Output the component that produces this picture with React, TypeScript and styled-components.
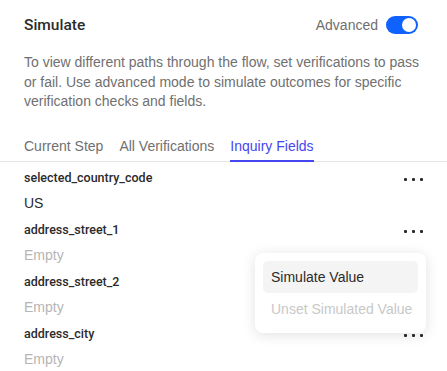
import React from "react";
import styled, { createGlobalStyle } from "styled-components";

const GlobalStyle = createGlobalStyle`
  body {
    margin: 0;
    background: #ffffff;
    font-family: "Liberation Sans", Arial, sans-serif;
    color: #2b2b2b;
  }
`;

const Panel = styled.div`
  position: relative;
  width: 447px;
  height: 371px;
  overflow: hidden;
  background: #fff;
`;

const Header = styled.header`
  display: flex;
  align-items: center;
  justify-content: space-between;
  padding: 15px 29px 0 24px;
  height: 20px;
`;

const Title = styled.h1`
  margin: 0;
  font-family: Roboto, "Liberation Sans", sans-serif;
  font-size: 15.5px;
  font-weight: 500;
  color: #2b2b2b;
`;

const ToggleWrap = styled.label`
  display: flex;
  align-items: center;
  gap: 8px;
  font-size: 14px;
  color: #6f6f6f;
`;

const Switch = styled.span<{ $on: boolean }>`
  position: relative;
  width: 32px;
  height: 18px;
  border-radius: 9px;
  background: ${(p) => (p.$on ? "#0f62fe" : "#cfcfcf")};

  &::after {
    content: "";
    position: absolute;
    top: 2px;
    left: ${(p) => (p.$on ? "16px" : "2px")};
    width: 14px;
    height: 14px;
    border-radius: 50%;
    background: #fff;
  }
`;

const Description = styled.p`
  margin: 18px 24px 0;
  font-size: 14px;
  line-height: 19.5px;
  color: #707070;
`;

const Tabs = styled.nav`
  display: flex;
  gap: 16px;
  margin-top: 25px;
  padding: 0 24px;
  border-bottom: 1px solid #e6e6e6;
`;

const Tab = styled.span<{ $active?: boolean }>`
  padding-bottom: 5px;
  font-size: 14px;
  line-height: 18px;
  color: ${(p) => (p.$active ? "#4646f0" : "#707070")};
  border-bottom: 2px solid ${(p) => (p.$active ? "#4646f0" : "transparent")};
  margin-bottom: -1px;
`;

const FieldList = styled.ul`
  list-style: none;
  margin: 0;
  padding: 8px 0 0;
`;

const Field = styled.li`
  display: flex;
  justify-content: space-between;
  padding: 0 24px;
  height: 52px;
`;

const FieldText = styled.div`
  display: flex;
  flex-direction: column;
`;

const FieldName = styled.span`
  font-family: Roboto, "Liberation Sans", sans-serif;
  font-size: 12.5px;
  font-weight: 500;
  line-height: 16px;
  color: #2b2b2b;
`;

const FieldValue = styled.span<{ $empty: boolean }>`
  margin-top: 8px;
  font-size: 14px;
  line-height: 18px;
  color: ${(p) => (p.$empty ? "#b5b5b5" : "#2b2b2b")};
`;

const MoreButton = styled.button`
  display: flex;
  gap: 5px;
  align-items: center;
  height: 8px;
  margin-top: 6px;
  padding: 0;
  border: 0;
  background: none;

  span {
    width: 3px;
    height: 3px;
    background: #2b2b2b;
    border-radius: 1px;
  }
`;

const Menu = styled.div`
  position: absolute;
  left: 255px;
  top: 253px;
  width: 155px;
  padding: 8px;
  border-radius: 8px;
  background: #fff;
  box-shadow: 0 2px 14px rgba(0, 0, 0, 0.12);
`;

const MenuItem = styled.div<{ $disabled?: boolean; $hover?: boolean }>`
  padding: 0 8px;
  height: 32px;
  display: flex;
  align-items: center;
  border-radius: 5px;
  font-size: 14px;
  white-space: nowrap;
  color: ${(p) => (p.$disabled ? "#c8c8c8" : "#2b2b2b")};
  background: ${(p) => (p.$hover ? "#f4f4f4" : "transparent")};
`;

const fields = [
  { name: "selected_country_code", value: "US" },
  { name: "address_street_1", value: "" },
  { name: "address_street_2", value: "" },
  { name: "address_city", value: "" },
];

export default function App() {
  return (
    <Panel>
      <GlobalStyle />
      <Header>
        <Title>Simulate</Title>
        <ToggleWrap>
          Advanced
          <Switch $on />
        </ToggleWrap>
      </Header>
      <Description>
        To view different paths through the flow, set verifications to pass or fail. Use
        advanced mode to simulate outcomes for specific verification checks and fields.
      </Description>
      <Tabs>
        <Tab>Current Step</Tab>
        <Tab>All Verifications</Tab>
        <Tab $active>Inquiry Fields</Tab>
      </Tabs>
      <FieldList>
        {fields.map((f) => (
          <Field key={f.name}>
            <FieldText>
              <FieldName>{f.name}</FieldName>
              <FieldValue $empty={!f.value}>{f.value || "Empty"}</FieldValue>
            </FieldText>
            <MoreButton aria-label="More">
              <span />
              <span />
              <span />
            </MoreButton>
          </Field>
        ))}
      </FieldList>
      <Menu>
        <MenuItem $hover>Simulate Value</MenuItem>
        <MenuItem $disabled>Unset Simulated Value</MenuItem>
      </Menu>
    </Panel>
  );
}
